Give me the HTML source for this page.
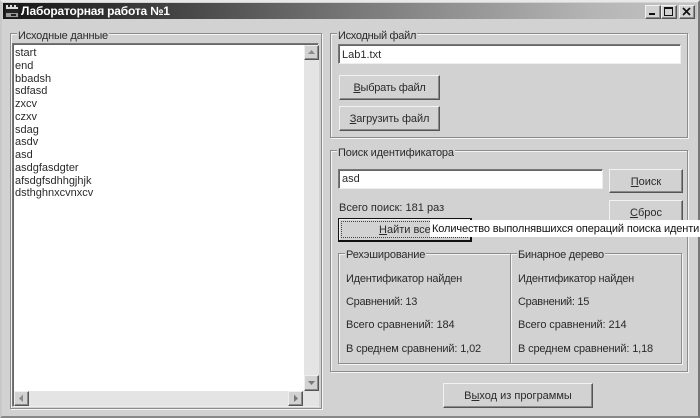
<!DOCTYPE html>
<html><head><meta charset="utf-8"><style>
html,body{margin:0;padding:0;background:#d2d2d2}
#w{position:relative;width:700px;height:418px;overflow:hidden;background:#d2d2d2;font:11px/13px "Liberation Sans",sans-serif;color:#2a2a2a;filter:blur(.35px)}
#w div{position:absolute;box-sizing:border-box}
.t{white-space:nowrap}
.g{border:1px solid #8c8c8c;box-shadow:1px 1px 0 #f4f4f4,inset 1px 1px 0 #f4f4f4}
.l{background:#d2d2d2;padding:0 1px;white-space:nowrap;line-height:12px}
.e{background:#fff;border:1px solid;border-color:#777 #eee #eee #777;box-shadow:inset 1px 1px 0 #666;padding:4px 0 0 3px}
.b{background:#d2d2d2;border:1px solid;border-color:#f2f2f2 #555 #555 #f2f2f2;box-shadow:inset -1px -1px 0 #8a8a8a;text-align:center;white-space:nowrap}
u{text-decoration:underline}
.sb{background:#d2d2d2;border:1px solid;border-color:#eee #555 #555 #eee;box-shadow:inset -1px -1px 0 #8a8a8a}
</style></head><body><div id="w">
<div style="left:0;top:0;width:700px;height:418px;border:2px solid;border-color:#e8e8e8 #777 #888 #c8c8c8"></div>
<div style="left:3px;top:3px;width:694px;height:16px;background:linear-gradient(90deg,#151515 0,#3a3a3a 20%,#777 50%,#b5b5b5 85%,#c4c4c4 100%)"></div>
<svg style="position:absolute;left:4px;top:3px" width="16" height="16" viewBox="0 0 16 16"><rect x="1" y="1" width="14" height="14" fill="#222"/><path d="M2 6V2h2v2h2V2h2v2h2V2h2v2h2v2z" fill="#ddd"/><rect x="2" y="10" width="12" height="4" fill="#999"/><rect x="7" y="11" width="5" height="2" fill="#222"/></svg>
<div class="t" style="left:21px;top:3px;color:#fff;font:bold 12px/16px 'Liberation Sans',sans-serif;letter-spacing:-.2px">Лабораторная работа №1</div>
<div class="b" style="left:645px;top:5px;width:16px;height:14px"></div>
<div style="left:649px;top:13px;width:6px;height:2px;background:#111"></div>
<div class="b" style="left:661px;top:5px;width:16px;height:14px"></div>
<div style="left:664px;top:7px;width:9px;height:9px;border:1px solid #111;border-top-width:2px"></div>
<div class="b" style="left:679px;top:5px;width:16px;height:14px"></div>
<svg style="position:absolute;left:682px;top:7px" width="10" height="10"><path d="M1 1L8 8M8 1L1 8" stroke="#111" stroke-width="1.7"/></svg>

<div class="g" style="left:10px;top:33px;width:312px;height:376px"></div>
<div class="l t" style="left:17px;top:30px;letter-spacing:-.2px">Исходные данные</div>
<div style="left:12px;top:43px;width:307px;height:364px;background:#fff;border:1px solid;border-color:#777 #eee #eee #777;box-shadow:inset 1px 1px 0 #666"></div>
<div class="t" style="left:15px;top:47px;line-height:12.75px">start<br>end<br>bbadsh<br>sdfasd<br>zxcv<br>czxv<br>sdag<br>asdv<br>asd<br>asdgfasdgter<br>afsdgfsdhhgjhjk<br>dsthghnxcvnxcv</div>
<div style="left:304px;top:45px;width:15px;height:361px;background:#e4e4e4"></div>
<div style="left:14px;top:391px;width:305px;height:15px;background:#e4e4e4"></div>
<div class="sb" style="left:304px;top:45px;width:15px;height:15px"></div>
<svg style="position:absolute;left:307px;top:49px" width="9" height="6"><path d="M4.5 1L8 5H1z" fill="#8a8a8a"/></svg>
<div class="sb" style="left:304px;top:375px;width:15px;height:16px"></div>
<svg style="position:absolute;left:307px;top:380px" width="9" height="6"><path d="M1 1H8L4.5 5z" fill="#777"/></svg>
<div class="sb" style="left:14px;top:391px;width:15px;height:15px"></div>
<svg style="position:absolute;left:18px;top:394px" width="6" height="9"><path d="M5 0.5V8L1 4.5z" fill="#8a8a8a"/></svg>
<div class="sb" style="left:288px;top:391px;width:15px;height:15px"></div>
<svg style="position:absolute;left:293px;top:394px" width="6" height="9"><path d="M1 0.5V8L5 4.5z" fill="#777"/></svg>

<div class="g" style="left:330px;top:33px;width:358px;height:105px"></div>
<div class="l t" style="left:337px;top:30px;letter-spacing:-.3px">Исходный файл</div>
<div class="e t" style="left:338px;top:44px;width:343px;height:20px">Lab1.txt</div>
<div class="b" style="left:339px;top:75px;width:101px;height:25px;line-height:24px;letter-spacing:-.25px"><u>В</u>ыбрать файл</div>
<div class="b" style="left:339px;top:106px;width:101px;height:25px;line-height:24px;letter-spacing:-.1px"><u>З</u>агрузить файл</div>

<div class="g" style="left:330px;top:150px;width:358px;height:222px"></div>
<div class="l t" style="left:337px;top:147px;letter-spacing:-.15px">Поиск идентификатора</div>
<div class="e t" style="left:338px;top:169px;width:265px;height:20px;padding-top:3px">asd</div>
<div class="b" style="left:609px;top:169px;width:74px;height:24px;line-height:25px"><u>П</u>оиск</div>
<div class="t" style="left:339px;top:202px">Всего поиск: 181 раз</div>
<div class="b" style="left:609px;top:200px;width:74px;height:24px;line-height:25px"><u>С</u>брос</div>
<div style="left:338px;top:218px;width:134px;height:24px;background:#d2d2d2;border:1px solid #111;border-width:1px 2px 2px 1px;box-shadow:inset 1px 1px 0 #f0f0f0"></div>
<div style="left:341px;top:221px;width:127px;height:17px;border:1px dotted #444"></div>
<div class="t" style="left:379px;top:224px"><u>Н</u>айти все</div>
<div class="t" style="left:430px;top:220px;width:270px;height:17px;background:#fff;color:#111;line-height:18px;padding-left:2px;overflow:hidden;letter-spacing:-.12px">Количество выполнявшихся операций поиска иденти</div>

<div class="g" style="left:338px;top:253px;width:173px;height:111px"></div>
<div class="g" style="left:510px;top:253px;width:172px;height:111px"></div>
<div class="l t" style="left:345px;top:249px;letter-spacing:-.15px">Рехэширование</div>
<div class="l t" style="left:517px;top:249px;letter-spacing:-.25px">Бинарное дерево</div>
<div class="t" style="left:346px;top:273px;letter-spacing:-.25px">Идентификатор найден</div>
<div class="t" style="left:346px;top:296px;letter-spacing:-.3px">Сравнений: 13</div>
<div class="t" style="left:346px;top:319px;letter-spacing:-.1px">Всего сравнений: 184</div>
<div class="t" style="left:346px;top:343px;letter-spacing:-.15px">В среднем сравнений: 1,02</div>
<div class="t" style="left:518px;top:273px;letter-spacing:-.25px">Идентификатор найден</div>
<div class="t" style="left:518px;top:296px;letter-spacing:-.3px">Сравнений: 15</div>
<div class="t" style="left:518px;top:319px;letter-spacing:-.1px">Всего сравнений: 214</div>
<div class="t" style="left:518px;top:343px;letter-spacing:-.15px">В среднем сравнений: 1,18</div>
<div class="b" style="left:443px;top:383px;width:150px;height:25px;line-height:25px">В<u>ы</u>ход из программы</div>
</div></body></html>
